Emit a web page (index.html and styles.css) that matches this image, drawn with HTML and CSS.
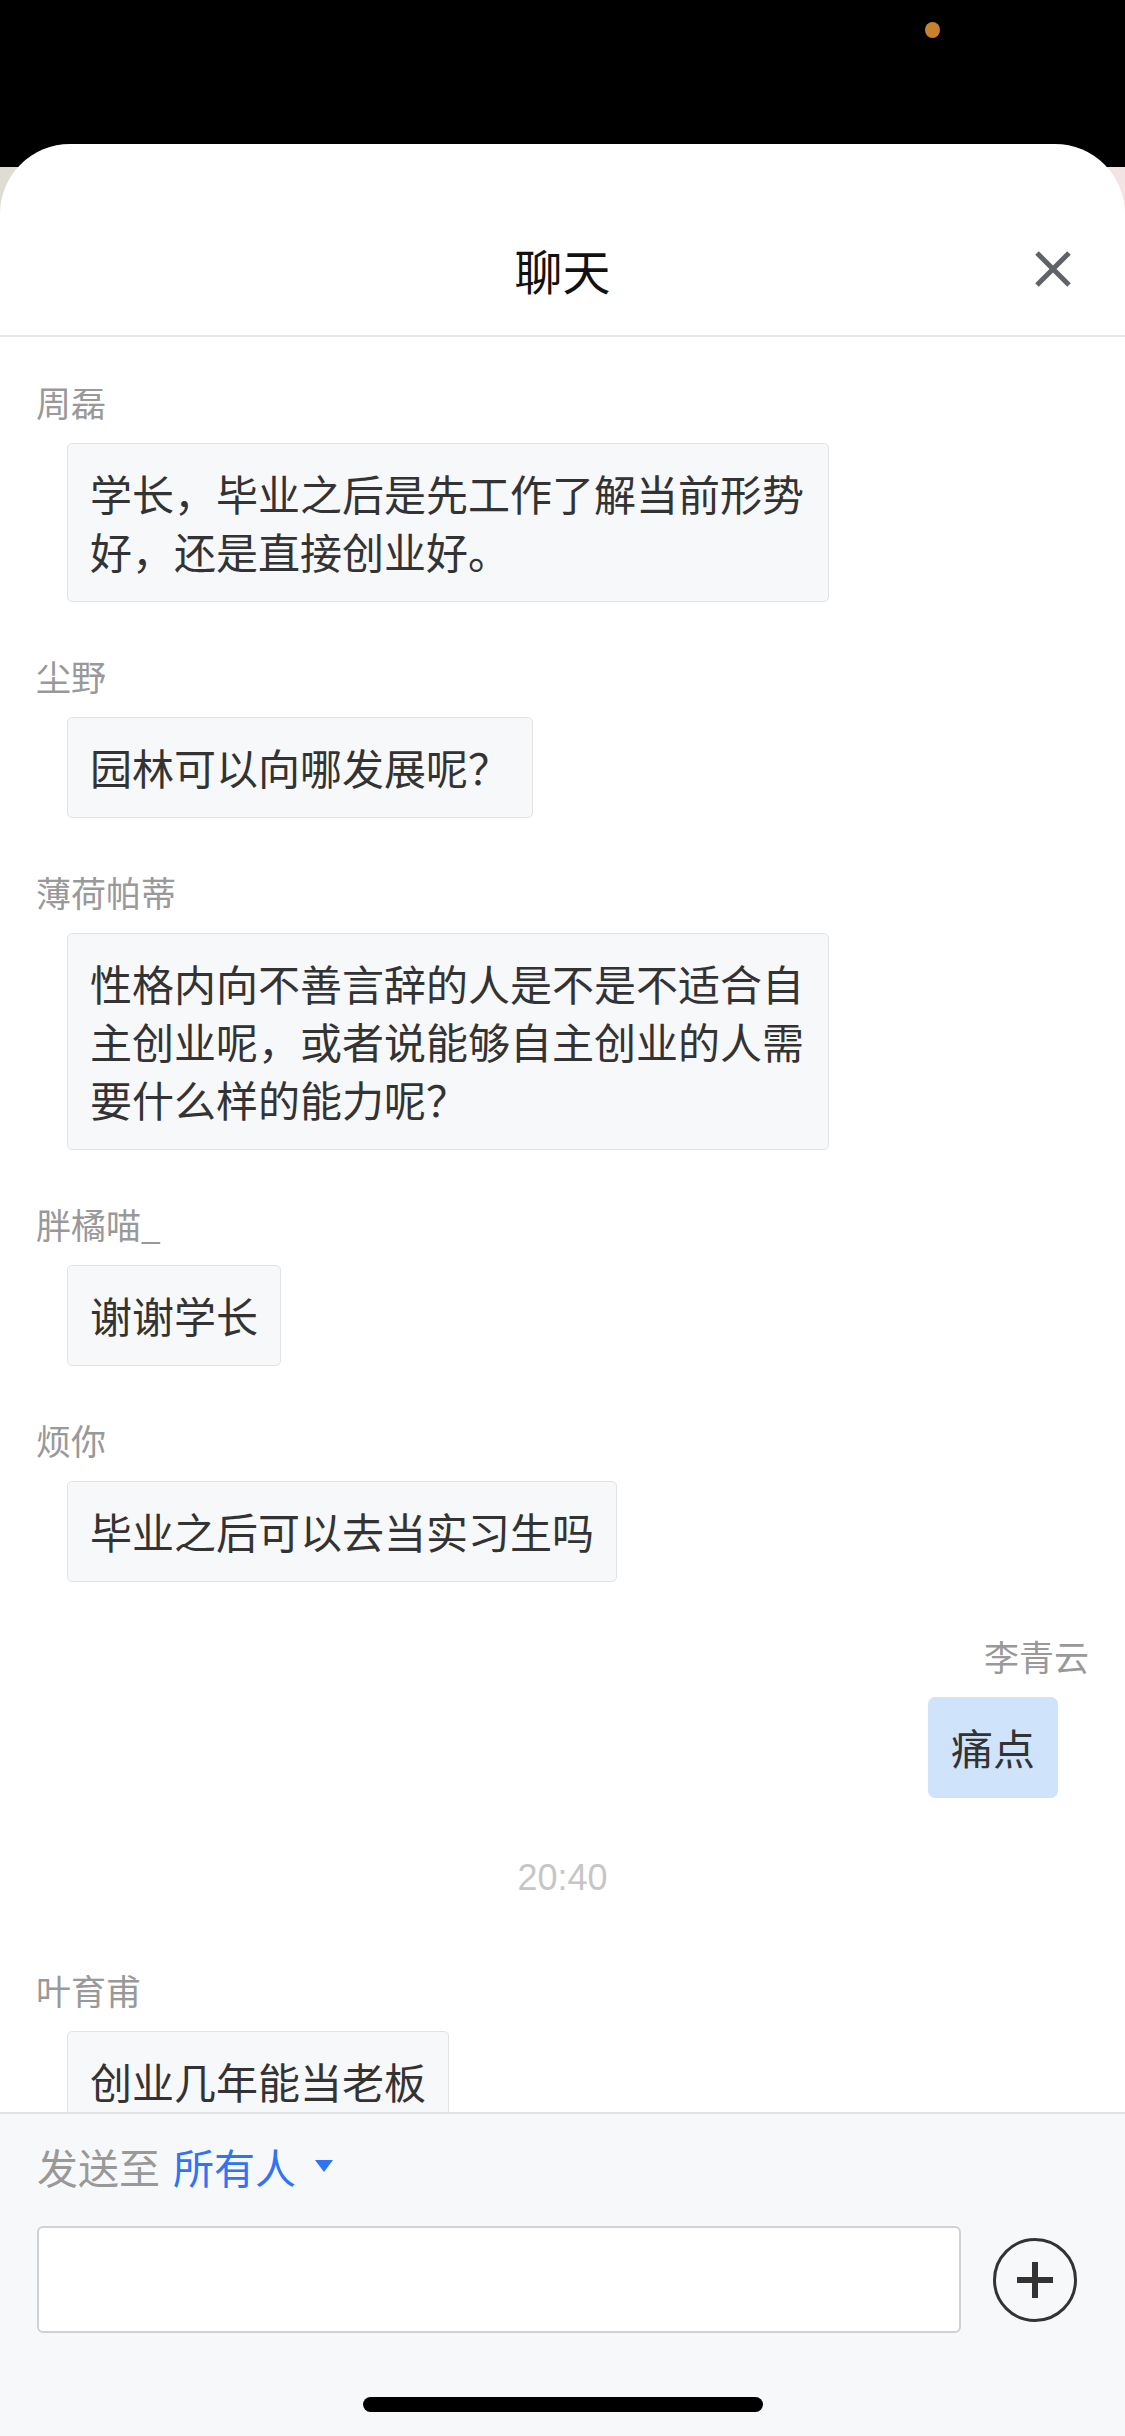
FILE: index.html
```html
<!DOCTYPE html>
<html lang="zh-CN">

<head>
    <meta charset="UTF-8">
    <meta name="viewport" content="width=device-width, initial-scale=1.0">
    <title>聊天</title>
    <link rel="stylesheet" href="styles.css">
</head>

<body>
    <div class="status-bar">
        <span class="privacy-dot"></span>
    </div>

    <div class="sheet">
        <header class="sheet-header">
            <span></span>
            <h1>聊天</h1>
            <button class="close-btn" aria-label="关闭">
                <svg width="38" height="38" viewBox="0 0 38 38">
                    <path d="M3 3L35 35M35 3L3 35" stroke="#5f6368" stroke-width="5" fill="none" />
                </svg>
            </button>
        </header>

        <main class="messages">
            <div class="msg">
                <div class="name">周磊</div>
                <div class="bubble">学长，毕业之后是先工作了解当前形势好，还是直接创业好。</div>
            </div>
            <div class="msg">
                <div class="name">尘野</div>
                <div class="bubble">园林可以向哪发展呢？</div>
            </div>
            <div class="msg">
                <div class="name">薄荷帕蒂</div>
                <div class="bubble">性格内向不善言辞的人是不是不适合自主创业呢，或者说能够自主创业的人需要什么样的能力呢？</div>
            </div>
            <div class="msg">
                <div class="name">胖橘喵_</div>
                <div class="bubble">谢谢学长</div>
            </div>
            <div class="msg">
                <div class="name">烦你</div>
                <div class="bubble">毕业之后可以去当实习生吗</div>
            </div>
            <div class="msg self">
                <div class="name">李青云</div>
                <div class="bubble">痛点</div>
            </div>
            <div class="time">20:40</div>
            <div class="msg">
                <div class="name">叶育甫</div>
                <div class="bubble">创业几年能当老板</div>
            </div>
        </main>

        <footer class="composer">
            <div class="send-to">
                <span class="send-label">发送至</span>
                <span class="send-target">所有人</span>
                <span class="caret"></span>
            </div>
            <div class="input-row">
                <div class="chat-input"></div>
                <button class="plus-btn" aria-label="更多">
                    <svg width="84" height="84" viewBox="0 0 84 84">
                        <circle cx="42" cy="42" r="40.5" stroke="#333" stroke-width="3" fill="none" />
                        <path d="M24 42H60M42 24V60" stroke="#333" stroke-width="6" fill="none" />
                    </svg>
                </button>
            </div>
            <div class="home-indicator"></div>
        </footer>
    </div>
</body>

</html>
```

FILE: styles.css
```css
* {
    box-sizing: border-box;
}

body {
    margin: 0;
    width: 1125px;
    height: 2436px;
    overflow: hidden;
    font-family: "Noto Sans CJK SC", sans-serif;
    color: #333;
    background:
        linear-gradient(#000 0 167px, transparent 167px),
        linear-gradient(to right, #dedcd3, #f2e4e4);
}

.status-bar {
    height: 144px;
    display: flex;
    justify-content: flex-end;
    align-items: flex-start;
    padding: 22px 185px 0 0;
}

.privacy-dot {
    width: 15px;
    height: 16px;
    border-radius: 50%;
    background-color: #c8822e;
}

.sheet {
    height: 2292px;
    background-color: #fff;
    border-radius: 70px 70px 0 0;
    display: flex;
    flex-direction: column;
    overflow: hidden;
}

.sheet-header {
    display: grid;
    grid-template-columns: 1fr auto 1fr;
    align-items: center;
    padding: 93px 0 34px;
    border-bottom: 2px solid #e8e8e8;
}

.sheet-header h1 {
    margin: 0;
    font-size: 48px;
    line-height: 64px;
    font-weight: normal;
    color: #111;
}

.close-btn {
    justify-self: end;
    margin-right: 53px;
    padding: 0;
    border: none;
    background: none;
    display: flex;
}

.messages {
    flex: 1;
    overflow: hidden;
    padding-top: 40px;
}

.msg {
    display: flex;
    flex-direction: column;
    align-items: flex-start;
    margin-bottom: 49px;
}

.msg.self {
    align-items: flex-end;
}

.name {
    padding: 0 36px;
    font-size: 35px;
    line-height: 50px;
    color: #999;
}

.bubble {
    margin: 16px 67px 0;
    max-width: 762px;
    padding: 20px 22px 21px;
    font-size: 42px;
    line-height: 58px;
    color: #333;
    background-color: #f7f8fa;
    border: 1px solid #e2e3e5;
    border-radius: 5px;
}

.self .bubble {
    background-color: #cfe4fb;
    border-color: #cfe4fb;
    border-radius: 7px;
}

.time {
    margin: 55px 0 62px;
    text-align: center;
    font-family: "Liberation Sans", Arial, sans-serif;
    font-size: 36px;
    line-height: 50px;
    color: #c6c6c6;
}

.composer {
    flex-shrink: 0;
    background-color: #f7f8fa;
    border-top: 2px solid #e0e2e6;
    padding: 24px 37px;
}

.send-to {
    display: flex;
    align-items: center;
    font-size: 41px;
    line-height: 56px;
}

.send-label {
    color: #999;
}

.send-target {
    margin-left: 13px;
    color: #2f73f6;
}

.caret {
    margin-left: 19px;
    width: 0;
    height: 0;
    border-left: 9px solid transparent;
    border-right: 9px solid transparent;
    border-top: 12px solid #2f73f6;
}

.input-row {
    display: flex;
    align-items: center;
    gap: 32px;
    margin-top: 32px;
    padding-right: 11px;
}

.chat-input {
    flex: 1;
    height: 107px;
    background-color: #fff;
    border: 2px solid #cfd1d4;
    border-radius: 6px;
}

.plus-btn {
    padding: 0;
    border: none;
    background: none;
    display: flex;
}

.home-indicator {
    width: 400px;
    height: 15px;
    margin: 64px auto 0;
    background-color: #000;
    border-radius: 8px;
}
```
